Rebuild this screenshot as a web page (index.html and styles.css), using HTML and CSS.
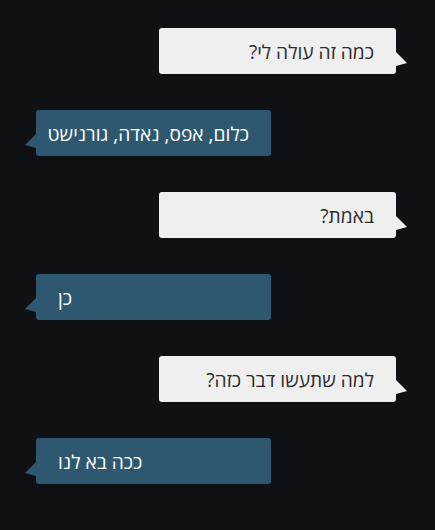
FILE: index.html
```html
<!DOCTYPE html>
<html lang="he">
<head>
<meta charset="utf-8">
<link rel="stylesheet" href="styles.css">
</head>
<body>
<div class="chat">
  <div class="msg msg-in"><span class="txt">כמה זה עולה לי?</span></div>
  <div class="msg msg-out"><span class="txt">כלום, אפס, נאדה, גורנישט</span></div>
  <div class="msg msg-in"><span class="txt">באמת?</span></div>
  <div class="msg msg-out"><span class="txt">כן</span></div>
  <div class="msg msg-in"><span class="txt">למה שתעשו דבר כזה?</span></div>
  <div class="msg msg-out"><span class="txt">ככה בא לנו</span></div>
</div>
</body>
</html>
```
FILE: styles.css
```css
html, body {
  margin: 0;
  padding: 0;
  background: #101115;
}
body {
  font-family: "Open Sans", "DejaVu Sans", sans-serif;
  width: 435px;
  height: 530px;
  overflow: hidden;
}
.chat {
  display: flex;
  flex-direction: column;
  gap: 36px;
  padding-top: 28px;
}
.msg {
  position: relative;
  box-sizing: border-box;
  height: 46px;
  border-radius: 3px;
  display: flex;
  align-items: center;
  padding: 0 22px;
  direction: rtl;
  white-space: nowrap;
  font-size: 19.2px;
}
.msg-in {
  align-self: flex-end;
  margin-right: 39px;
  width: 237px;
  background: #efefef;
  color: #2b2b2b;
}
.msg-out {
  align-self: flex-start;
  margin-left: 36px;
  width: 235px;
  background: #2d5870;
  color: #ffffff;
}
.msg-out .txt {
  margin-right: auto;
}
.msg::after {
  content: "";
  position: absolute;
  top: 24px;
  width: 11px;
  height: 14px;
}
.msg-in::after {
  left: 100%;
  background: #efefef;
  clip-path: polygon(0 0, 100% 78%, 0 100%);
}
.msg-out::after {
  right: 100%;
  background: #2d5870;
  clip-path: polygon(100% 0, 0 78%, 100% 100%);
}
```
